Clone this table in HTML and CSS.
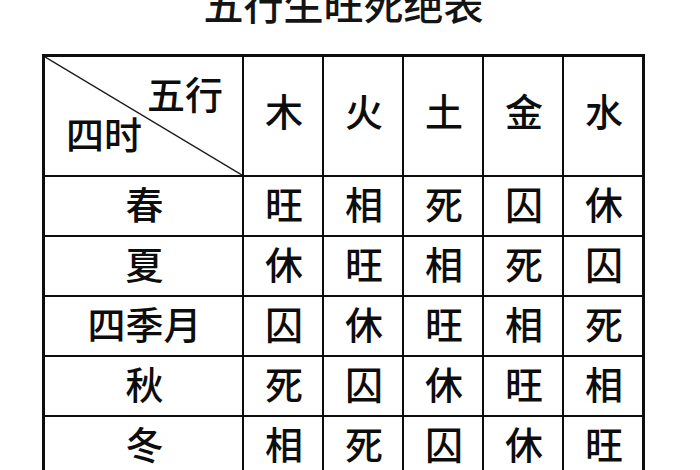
FILE: index.html
```html
<!DOCTYPE html>
<html lang="zh-CN">
<head>
<meta charset="utf-8">
<title>五行生旺死绝表</title>
<link rel="stylesheet" href="styles.css">
</head>
<body>
<div class="page">
  <h1 class="title">五行生旺死绝表</h1>
  <div class="grid">
    <div class="cell corner">
      <svg class="diag" viewBox="0 0 197 118" preserveAspectRatio="none" aria-hidden="true">
        <line x1="0" y1="0" x2="197" y2="118" stroke="#1a1a1a" stroke-width="1.5"/>
      </svg>
      <span class="corner-top">五行</span>
      <span class="corner-bottom">四时</span>
    </div>
    <div class="cell head">木</div>
    <div class="cell head">火</div>
    <div class="cell head">土</div>
    <div class="cell head">金</div>
    <div class="cell head">水</div>

    <div class="cell">春</div>
    <div class="cell">旺</div><div class="cell">相</div><div class="cell">死</div><div class="cell">囚</div><div class="cell">休</div>

    <div class="cell">夏</div>
    <div class="cell">休</div><div class="cell">旺</div><div class="cell">相</div><div class="cell">死</div><div class="cell">囚</div>

    <div class="cell">四季月</div>
    <div class="cell">囚</div><div class="cell">休</div><div class="cell">旺</div><div class="cell">相</div><div class="cell">死</div>

    <div class="cell">秋</div>
    <div class="cell">死</div><div class="cell">囚</div><div class="cell">休</div><div class="cell">旺</div><div class="cell">相</div>

    <div class="cell">冬</div>
    <div class="cell">相</div><div class="cell">死</div><div class="cell">囚</div><div class="cell">休</div><div class="cell">旺</div>
  </div>
</div>
</body>
</html>
```
FILE: styles.css
```css
html, body {
  margin: 0;
  padding: 0;
  background: #ffffff;
}

body {
  font-family: "Noto Sans CJK SC", "Noto Sans", sans-serif;
  color: #0d0d0d;
  overflow: hidden;
  height: 470px;
}

.page {
  width: 603px;
  margin-left: 42px;
}

.title {
  margin: -17px 0 31px 0;
  font-size: 40px;
  line-height: 40px;
  font-weight: 500;
  text-align: center;
  color: #141414;
}

.grid {
  display: grid;
  grid-template-columns: 197px repeat(5, 78px);
  grid-template-rows: 118px repeat(5, 58px);
  gap: 2px;
  padding: 3px 3px 0 3px;
  background: #0d0d0d;
}

.cell {
  background: #ffffff;
  display: flex;
  align-items: center;
  justify-content: center;
  font-size: 38px;
  line-height: 40px;
  font-weight: 500;
  padding: 0 0 6px 2px;
  box-sizing: border-box;
}

.head {
  padding-bottom: 12px;
}

.corner {
  position: relative;
  flex-direction: column;
  align-items: stretch;
  justify-content: flex-start;
  padding: 16px 19px 0 21px;
}

.corner-top {
  align-self: flex-end;
  position: relative;
}

.corner-bottom {
  align-self: flex-start;
  position: relative;
}

.diag {
  position: absolute;
  left: 0;
  top: 0;
  width: 100%;
  height: 100%;
}
```
